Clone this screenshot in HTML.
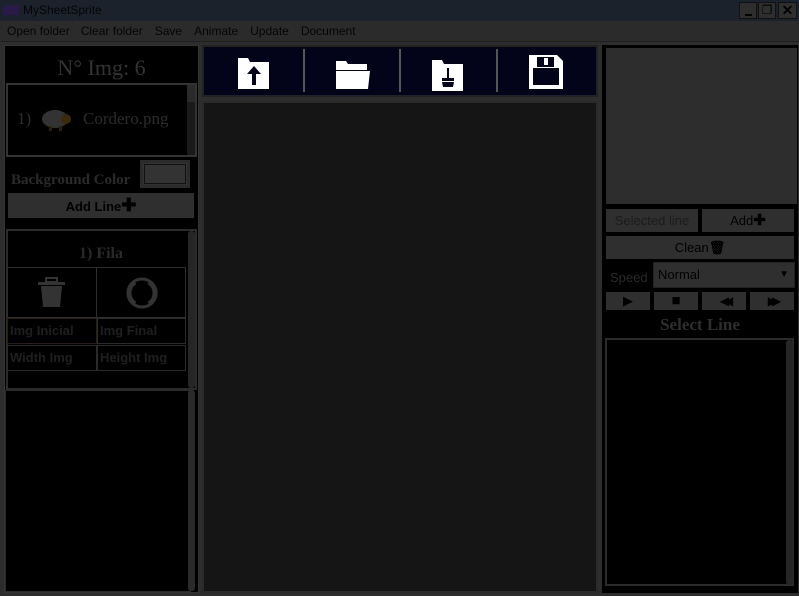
<!DOCTYPE html>
<html><head><meta charset="utf-8"><style>
*{margin:0;padding:0;box-sizing:border-box}
body{width:799px;height:596px;background:#2d2d2d;position:relative;overflow:hidden;font-family:"Liberation Sans",sans-serif}
.a{position:absolute}
.serif{font-family:"Liberation Serif",serif}
.btn{position:absolute;background:#2f2f2f;color:#000;font-size:13px;text-align:center}
</style></head><body>
<div class="a" style="left:0;top:0;width:799px;height:21px;background:#1b222c"></div>
<div class="a" style="left:3px;top:5px;width:16px;height:10px;background:#2a1a4a"></div>
<div class="a" style="left:23px;top:3px;font-size:12px;color:#050505">MySheetSprite</div>
<div class="a" style="left:739px;top:2px;width:18px;height:17px;background:#2e2e2e;border:1px solid #111"><div class="a" style="left:5px;top:11px;width:7px;height:2px;background:#000"></div></div>
<div class="a" style="left:758px;top:2px;width:18px;height:17px;background:#2e2e2e;border:1px solid #111;font-size:12px;text-align:center;line-height:15px;color:#000">&#x2750;</div>
<div class="a" style="left:778px;top:2px;width:19px;height:17px;background:#2e2e2e;border:1px solid #111;font-size:14px;font-weight:bold;text-align:center;line-height:15px;color:#000">✕</div>
<div class="a" style="left:0;top:21px;width:799px;height:21px;background:#2b2b2b;border-bottom:1px solid #1f1f1f"></div>
<div class="a" style="left:7px;top:24px;font-size:12px;color:#050505">
<span>Open folder</span><span style="margin-left:11px">Clear folder</span><span style="margin-left:12px">Save</span><span style="margin-left:12px">Animate</span><span style="margin-left:12px">Update</span><span style="margin-left:12px">Document</span></div>
<div class="a" style="left:4px;top:45px;width:195px;height:548px;background:#000;border:1px solid #333"></div>
<div class="a serif" style="left:4px;top:55px;width:195px;text-align:center;font-size:22px;color:#333">N° Img: 6</div>
<div class="a" style="left:6px;top:83px;width:191px;height:74px;border:2px solid #333"></div>
<div class="a" style="left:187px;top:85px;width:8px;height:70px;background:#1a1a1a"></div>
<div class="a" style="left:187px;top:85px;width:8px;height:17px;background:#2a2a2a"></div>
<div class="a serif" style="left:17px;top:109px;font-size:17px;color:#2c2c2c">1)</div>
<svg class="a" style="left:40px;top:107px" width="34" height="26"><ellipse cx="15" cy="12" rx="13" ry="9" fill="#333"/><circle cx="26" cy="12" r="5" fill="#3b2b08"/><rect x="9" y="19" width="3" height="5" fill="#2a2208"/><rect x="19" y="19" width="3" height="5" fill="#2a2208"/></svg>
<div class="a serif" style="left:83px;top:109px;font-size:17px;color:#2c2c2c">Cordero.png</div>
<div class="a serif" style="left:11px;top:172px;font-size:15px;font-weight:bold;color:#2a2a2a">Background Color</div>
<div class="a" style="left:140px;top:160px;width:50px;height:28px;background:#333;border:3px solid #2b2b2b;outline:1px solid #111;outline-offset:-5px"></div>
<div class="btn" style="left:8px;top:193px;width:186px;height:25px;line-height:25px;font-weight:bold;font-size:13px">Add Line<b style="font-size:18px">✚</b></div>
<div class="a" style="left:6px;top:229px;width:191px;height:161px;border:2px solid #2b2b2b"></div>
<div class="a" style="left:188px;top:231px;width:7px;height:157px;background:#262626;border-radius:3px"></div>
<div class="a serif" style="left:6px;top:245px;width:190px;text-align:center;font-size:16px;font-weight:bold;color:#2a2a2a">1) Fila</div>
<div class="a" style="left:7px;top:267px;width:90px;height:51px;border:1px solid #2e2e2e"></div>
<div class="a" style="left:96px;top:267px;width:90px;height:51px;border:1px solid #2e2e2e"></div>
<svg class="a" style="left:38px;top:277px" width="28" height="32"><rect x="0" y="5" width="27" height="3" fill="#333"/><rect x="8" y="1" width="11" height="4" fill="none" stroke="#333" stroke-width="2"/><path d="M3 9h21l-2 21h-17z" fill="#333"/></svg>
<svg class="a" style="left:125px;top:276px" width="34" height="34"><circle cx="17" cy="17" r="14" fill="none" stroke="#333" stroke-width="3"/><path d="M10 6a13 13 0 0 0 0 22" fill="none" stroke="#333" stroke-width="5"/><path d="M24 6a13 13 0 0 1 0 22" fill="none" stroke="#333" stroke-width="5"/></svg>
<div class="a" style="left:7px;top:318px;width:90px;height:26px;border:1px solid #2a2010;font-size:13px;font-weight:bold;color:#1f1f1f;line-height:24px;padding-left:2px">Img Inicial</div>
<div class="a" style="left:97px;top:318px;width:89px;height:26px;border:1px solid #2a2a2a;font-size:13px;font-weight:bold;color:#1f1f1f;line-height:24px;padding-left:2px">Img Final</div>
<div class="a" style="left:7px;top:345px;width:90px;height:26px;border:1px solid #2a2a2a;font-size:13px;font-weight:bold;color:#1f1f1f;line-height:24px;padding-left:2px">Width Img</div>
<div class="a" style="left:97px;top:345px;width:89px;height:26px;border:1px solid #2a2a2a;font-size:13px;font-weight:bold;color:#1f1f1f;line-height:24px;padding-left:2px">Height Img</div>
<div class="a" style="left:5px;top:390px;width:186px;height:202px;border:1px solid #2b2b2b"></div>
<div class="a" style="left:188px;top:390px;width:7px;height:201px;background:#2a2a2a;border-radius:3px"></div>
<div class="a" style="left:202px;top:45px;width:396px;height:52px;background:#03031a;border:2px solid #222"></div>
<div class="a" style="left:303px;top:49px;width:2px;height:43px;background:#555"></div>
<div class="a" style="left:399px;top:49px;width:2px;height:43px;background:#555"></div>
<div class="a" style="left:496px;top:49px;width:2px;height:43px;background:#555"></div>
<svg class="a" style="left:238px;top:58px" width="32" height="32"><path d="M0 0h10l2 4h19v27h-31z" fill="#fff"/><path d="M16 8l-7 8h5v11h4v-11h5z" fill="#03031a"/></svg>
<svg class="a" style="left:335px;top:58px" width="36" height="32"><path d="M1 3h10l2 3h19v6h-31z" fill="#fff"/><path d="M1 13h34l-2 18h-32z" fill="#fff"/></svg>
<svg class="a" style="left:432px;top:60px" width="32" height="32"><path d="M0 0h10l2 4h19v27h-31z" fill="#fff"/><path d="M15 8h2v10h5v3h-12v-3h5z M10 22h12l-1 5h-10z" fill="#03031a"/></svg>
<svg class="a" style="left:528px;top:54px" width="36" height="36"><path d="M1 1h28l6 6v28h-34z" fill="#fff"/><rect x="5" y="14" width="26" height="17" fill="#03031a"/><rect x="9" y="3" width="17" height="10" fill="#03031a"/><rect x="16" y="4" width="4" height="7" fill="#fff"/></svg>
<div class="a" style="left:202px;top:101px;width:396px;height:492px;background:#151515;border:2px solid #2a2a2a"></div>
<div class="a" style="left:602px;top:45px;width:196px;height:548px;background:#000"></div>
<div class="a" style="left:606px;top:48px;width:191px;height:156px;background:#2d2d2d"></div>
<div class="btn" style="left:606px;top:209px;width:92px;height:23px;line-height:23px;color:#1c1c1c">Selected line</div>
<div class="btn" style="left:702px;top:209px;width:92px;height:23px;line-height:23px">Add<b style="font-size:15px">✚</b></div>
<div class="btn" style="left:606px;top:236px;width:188px;height:23px;line-height:23px">Clean<b>🗑</b></div>
<div class="a" style="left:610px;top:270px;font-size:13px;color:#2a2a2a">Speed</div>
<div class="a" style="left:653px;top:262px;width:142px;height:26px;background:#2f2f2f;border:1px solid #222;font-size:13px;color:#000;line-height:24px;padding-left:4px">Normal<span style="position:absolute;right:5px;font-size:10px">▼</span></div>
<div class="btn" style="left:606px;top:292px;width:44px;height:18px;line-height:18px;font-size:13px">▶</div>
<div class="btn" style="left:654px;top:292px;width:44px;height:18px;line-height:18px;font-size:15px">■</div>
<div class="btn" style="left:702px;top:292px;width:44px;height:18px;line-height:18px;font-size:12px;letter-spacing:-5px">◀◀</div>
<div class="btn" style="left:750px;top:292px;width:44px;height:18px;line-height:18px;font-size:12px;letter-spacing:-5px">▶▶</div>
<div class="a serif" style="left:602px;top:315px;width:196px;text-align:center;font-size:17px;font-weight:bold;color:#2e2e2e">Select Line</div>
<div class="a" style="left:605px;top:338px;width:189px;height:248px;border:2px solid #2b2b2b"></div>
<div class="a" style="left:786px;top:340px;width:7px;height:245px;background:#262626;border-radius:3px"></div>
</body></html>
